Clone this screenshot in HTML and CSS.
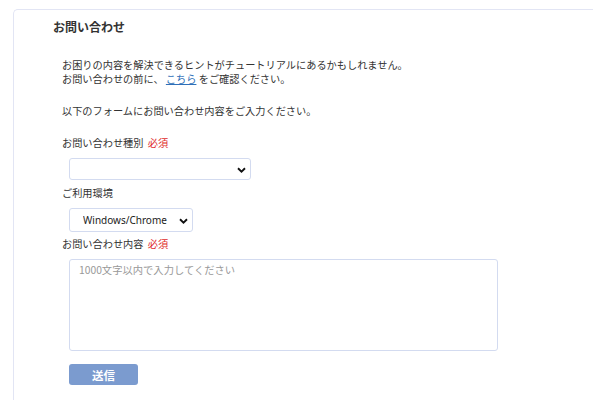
FILE: index.html
```html
<!DOCTYPE html>
<html lang="ja">
<head>
<meta charset="utf-8">
<link rel="stylesheet" href="styles.css">
</head>
<body>
<div class="card">
  <h1 class="title">お問い合わせ</h1>
  <div class="content">
    <p class="intro">お困りの内容を解決できるヒントがチュートリアルにあるかもしれません。<br>お問い合わせの前に、 <a href="#" class="link">こちら</a> をご確認ください。</p>
    <p class="lead">以下のフォームにお問い合わせ内容をご入力ください。</p>
    <form class="form">
      <div class="label">お問い合わせ種別 <span class="req">必須</span></div>
      <div class="select-wrap select-type">
        <select class="select"><option></option></select>
        <svg class="chev" width="9" height="6" viewBox="0 0 9 6"><path d="M1 1.2 L4.5 4.6 L8 1.2" fill="none" stroke="#111" stroke-width="1.9"/></svg>
      </div>
      <div class="label label-env">ご利用環境</div>
      <div class="select-wrap select-env">
        <select class="select"><option>Windows/Chrome</option></select>
        <svg class="chev" width="9" height="6" viewBox="0 0 9 6"><path d="M1 1.2 L4.5 4.6 L8 1.2" fill="none" stroke="#111" stroke-width="1.9"/></svg>
      </div>
      <div class="label label-body">お問い合わせ内容 <span class="req">必須</span></div>
      <textarea class="textarea" placeholder="1000文字以内で入力してください"></textarea>
      <button type="button" class="submit">送信</button>
    </form>
  </div>
</div>
</body>
</html>
```
FILE: styles.css
```css
html, body {
  margin: 0;
  padding: 0;
  background: #ffffff;
  overflow: hidden;
}
body {
  height: 400px;
  box-sizing: border-box;
  padding: 9px 0 0 13px;
  display: flex;
  font-family: "Noto Sans CJK JP", "Noto Sans", sans-serif;
  color: #333333;
}
.card {
  flex: 1;
  border-top: 1px solid #e2e5f4;
  border-left: 1px solid #e2e5f4;
  border-top-left-radius: 5px;
  padding: 8px 0 0 39px;
  box-sizing: border-box;
  overflow: hidden;
}
.title {
  margin: 0;
  font-size: 12px;
  line-height: 18px;
  font-weight: 700;
  color: #333333;
}
.content {
  padding-left: 9px;
  padding-top: 22px;
  font-size: 10.2px;
  line-height: 14px;
}
.intro, .lead {
  margin: 0;
}
.lead {
  margin-top: 18px;
}
.link {
  color: #2f6fb8;
  text-decoration: underline;
}
.form {
  margin: 18px 0 0 0;
  display: flex;
  flex-direction: column;
  align-items: flex-start;
}
.label {
  line-height: 14px;
  color: #333333;
}
.req {
  color: #e02b2b;
  margin-left: 2px;
}
.label-env { margin-top: 6px; }
.label-body { margin-top: 5px; }
.select-wrap {
  position: relative;
  margin: 8px 0 0 7px;
}
.select {
  appearance: none;
  -webkit-appearance: none;
  display: block;
  box-sizing: border-box;
  border: 1px solid #d3dbf0;
  border-radius: 3px;
  background: #ffffff;
  font-family: "Noto Sans", "Noto Sans CJK JP", sans-serif;
  font-size: 10px;
  color: #222222;
  padding: 0 0 0 13px;
  margin: 0;
  outline: none;
}
.select-type .select { width: 182px; height: 22px; }
.select-env .select { width: 124px; height: 24px; }
.chev {
  position: absolute;
  right: 5px;
  top: 50%;
  margin-top: -2px;
}
.textarea {
  display: block;
  box-sizing: border-box;
  margin: 8px 0 0 7px;
  width: 429px;
  height: 92px;
  border: 1px solid #d3dbf0;
  border-radius: 3px;
  padding: 3px 9px;
  resize: none;
  font-family: "Noto Sans CJK JP", sans-serif;
  font-size: 10.3px;
  line-height: 14px;
  outline: none;
}
.textarea::placeholder {
  color: #999999;
}
.submit {
  margin: 13px 0 0 7px;
  width: 69px;
  height: 21px;
  border: none;
  border-radius: 3px;
  background: #7b9bcf;
  color: #ffffff;
  font-family: "Noto Sans CJK JP", sans-serif;
  font-size: 11.5px;
  font-weight: 700;
  padding: 0;
}
```
